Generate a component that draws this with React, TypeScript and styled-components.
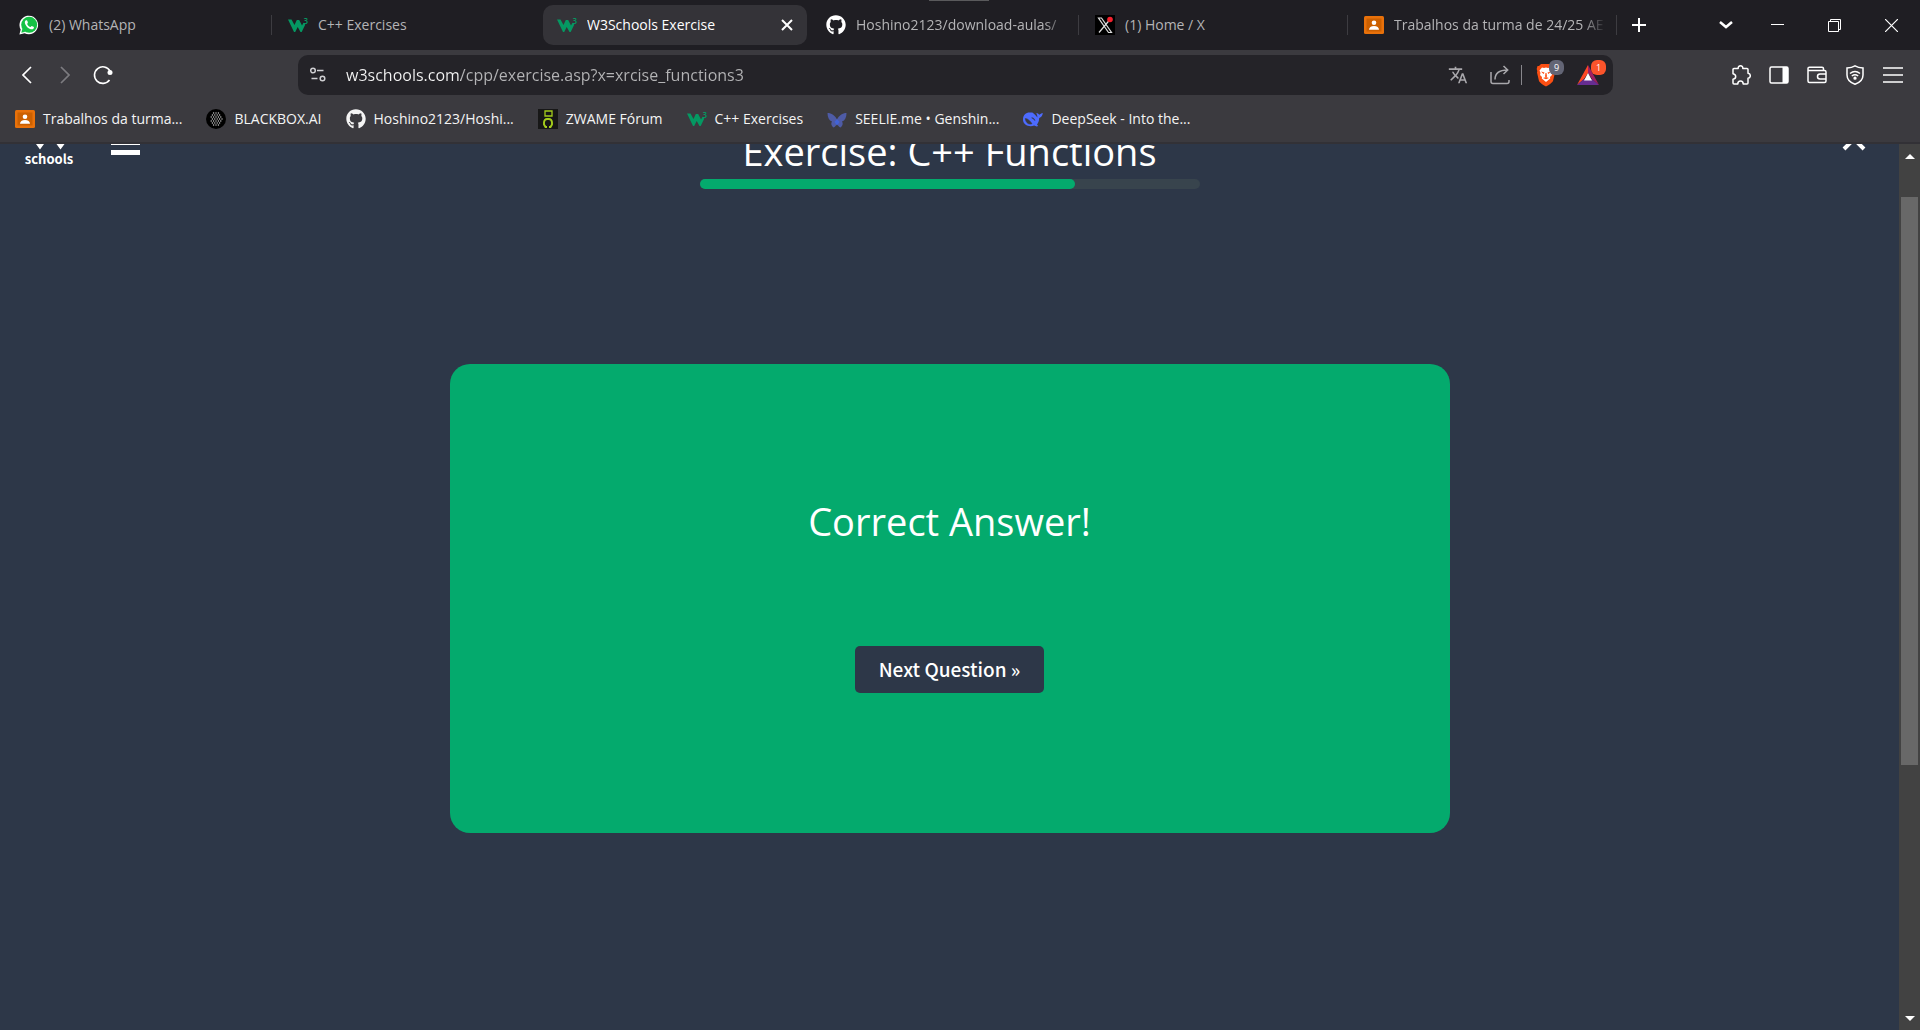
import React from 'react';
import styled, { createGlobalStyle } from 'styled-components';
import { FaGithub } from 'react-icons/fa';
import { MdTranslate } from 'react-icons/md';

const green = '#04aa6d';
const navy = '#2d3748';
const uiFont = '"Segoe UI", "Open Sans", "Noto Sans", sans-serif';

const GlobalStyle = createGlobalStyle`
  *, *::before, *::after { box-sizing: border-box; }
  body { margin: 0; background: ${navy}; font-family: ${uiFont}; color: #fff; }
  button, input { font: inherit; color: inherit; border: 0; background: none; padding: 0; margin: 0; }
  button { cursor: pointer; }
  svg { display: block; flex: none; }
`;

const Shell = styled.div`
  display: flex;
  flex-direction: column;
  height: 100vh;
  overflow: hidden;
`;

/* ---------- tab strip ---------- */

const TabStrip = styled.header`
  position: relative;
  display: flex;
  align-items: center;
  height: 50px;
  flex: none;
  padding-left: 5px;
  background: #1f1e23;
`;

const DragHandle = styled.span`
  position: absolute;
  top: 0;
  left: 50%;
  width: 60px;
  height: 1px;
  margin-left: -31px;
  background: #5a5a5c;
`;

const TabList = styled.div`
  display: flex;
  align-items: center;
  min-width: 0;
`;

const Tab = styled.div<{ $active?: boolean }>`
  display: flex;
  align-items: center;
  flex: 0 1 264px;
  width: 264px;
  min-width: 0;
  height: 40px;
  padding: 0 8px 0 14px;
  border-radius: 10px;
  background: ${(p) => (p.$active ? '#343338' : 'transparent')};
  color: ${(p) => (p.$active ? '#fff' : '#b4b4b6')};
`;

const TabButton = styled.button`
  display: flex;
  align-items: center;
  gap: 10px;
  flex: 1;
  min-width: 0;
  height: 100%;
  text-align: left;
`;

const TabTitle = styled.span<{ $fade?: boolean }>`
  flex: 1;
  min-width: 0;
  overflow: hidden;
  white-space: nowrap;
  font-size: 14px;
  line-height: 20px;
  ${(p) => p.$fade && 'mask-image: linear-gradient(to left, transparent, #000 24px);'}
`;

const TabDivider = styled.span<{ $hidden?: boolean }>`
  flex: none;
  width: 1px;
  height: 20px;
  margin: 0 2px;
  background: ${(p) => (p.$hidden ? 'transparent' : '#3d3c41')};
`;

const IconButton = styled.button<{ $width?: number }>`
  display: flex;
  align-items: center;
  justify-content: center;
  flex: none;
  width: ${(p) => p.$width ?? 38}px;
  height: 40px;
`;

const TabClose = styled(IconButton)`
  width: 24px;
`;

const WindowControls = styled.div`
  display: flex;
  align-items: center;
  margin-left: auto;
`;

/* ---------- toolbar ---------- */

const Toolbar = styled.div`
  display: flex;
  align-items: center;
  flex: none;
  height: 50px;
  background: #3b3a3f;
`;

const NavGroup = styled.nav`
  display: flex;
  flex: none;
  width: 298px;
  padding-left: 8px;
`;

const AddressBar = styled.form`
  display: flex;
  align-items: center;
  flex: 1;
  min-width: 0;
  height: 40px;
  padding-right: 4px;
  border-radius: 10px;
  background: #242328;
`;

const AddressInput = styled.input`
  flex: 1;
  min-width: 0;
  height: 40px;
  margin-left: 8px;
  outline: none;
  font-size: 16px;
  color: #b4b4b6;
  background: linear-gradient(to right, #f4f4f4 115px, #b4b4b6 115px);
  background-clip: text;
  -webkit-text-fill-color: transparent;
`;

const AddressDivider = styled.span`
  flex: none;
  width: 1px;
  height: 20px;
  margin-right: 3px;
  background: #88878c;
`;

const BadgeHost = styled(IconButton)`
  position: relative;
  width: 42px;
`;

const Badge = styled.span<{ $color: string }>`
  position: absolute;
  top: 5px;
  left: 24px;
  width: 15px;
  height: 15px;
  border-radius: 6px;
  background: ${(p) => p.$color};
  color: #fff;
  font-size: 9px;
  line-height: 15px;
  text-align: center;
`;

const ToolGroup = styled.div`
  display: flex;
  justify-content: flex-end;
  flex: none;
  width: 307px;
  padding-right: 8px;
`;

/* ---------- bookmarks ---------- */

const BookmarkBar = styled.nav`
  display: flex;
  align-items: center;
  gap: 24px;
  flex: none;
  height: 44px;
  padding: 0 15px 4px;
  border-bottom: 2px solid #323136;
  background: #3b3a3f;
`;

const Bookmark = styled.a`
  display: flex;
  align-items: center;
  gap: 8px;
  color: #f4f4f4;
  font-size: 14px;
  line-height: 20px;
  white-space: nowrap;
  text-decoration: none;
`;

/* ---------- page ---------- */

const Viewport = styled.div`
  display: flex;
  flex: 1;
  min-height: 0;
`;

const Page = styled.main`
  flex: 1;
  min-width: 0;
  overflow: hidden;
  background: ${navy};
`;

const ScrolledContent = styled.div`
  margin-top: -36px;
`;

const PageHeader = styled.div`
  display: flex;
  align-items: flex-start;
  padding: 0 25px;
`;

const HeaderSide = styled.div`
  display: flex;
  flex: 1;
  gap: 38px;
`;

const HeaderEnd = styled(HeaderSide)`
  justify-content: flex-end;
`;

const Logo = styled.a`
  display: flex;
  flex-direction: column;
  align-items: center;
  width: 48px;
  padding-top: 4px;
  color: #fff;
  font-family: "Noto Sans CJK SC", sans-serif;
  font-size: 13px;
  font-weight: 700;
  line-height: 18px;
  text-decoration: none;
`;

const MenuButton = styled.button`
  display: flex;
  flex-direction: column;
  gap: 5px;
  width: 29px;
  padding-top: 22px;
`;

const MenuBar = styled.span`
  width: 100%;
  height: 5px;
  background: #fff;
`;

const CloseButton = styled.button`
  padding: 20px 7px 0;
`;

const Progress = styled.section`
  flex: 0 1 500px;
  padding-top: 17px;
`;

const Title = styled.h1`
  margin: 0 0 2px;
  font-size: 38px;
  font-weight: 400;
  line-height: 52px;
  text-align: center;
  white-space: nowrap;
`;

const ProgressTrack = styled.div`
  height: 10px;
  border-radius: 5px;
  background: #38444d;
`;

const ProgressFill = styled.div`
  width: 75%;
  height: 100%;
  border-radius: 5px;
  background: ${green};
`;

const AnswerCard = styled.section`
  display: flex;
  flex-direction: column;
  align-items: center;
  gap: 98px;
  width: calc(100% - 32px);
  max-width: 1000px;
  margin: 175px auto 0;
  padding: 130px 24px 140px;
  border-radius: 20px;
  background: ${green};
`;

const AnswerText = styled.h2`
  margin: 0;
  font-size: 38px;
  font-weight: 400;
  line-height: 54px;
`;

const NextButton = styled.button`
  height: 47px;
  padding: 0 24px 2px;
  border-radius: 5px;
  background: ${navy};
  font-family: "Source Sans Pro", "Noto Sans CJK SC", sans-serif;
  font-size: 19px;
  font-weight: 500;
`;

/* ---------- scrollbar ---------- */

const Scrollbar = styled.div`
  display: flex;
  flex-direction: column;
  flex: none;
  width: 21px;
  padding: 0 2px;
  background: #424242;
`;

const ScrollArrow = styled.button`
  display: flex;
  align-items: center;
  justify-content: center;
  flex: none;
  height: 24px;
`;

const ScrollSpace = styled.div<{ $part: number }>`
  flex: ${(p) => p.$part} 1 0;
`;

const ScrollThumb = styled(ScrollSpace)`
  background: #686868;
`;

/* ---------- drawings ---------- */

const line = { fill: 'none', stroke: 'currentColor' } as const;

const W3Icon = () => (
  <svg width="20" height="20" viewBox="0 0 20 20">
    <path d="M0 4.500h3.500l3 5.500 2.300-5h2.400l2.800 5.500 1.500-2.800 1.800 1.800-3.600 7.500h-1.200L9.700 12l-2.500 5H6z" fill="#059862" />
    <text x="15.500" y="9" fontSize="8" fontWeight="600" fill="#059862">3</text>
  </svg>
);

const WhatsAppIcon = () => (
  <svg width="20" height="20" viewBox="0 0 20 20">
    <path d="M.4 19.600l1.300-5A9.300 9.300 0 1 1 5.600 18.300z" fill="#fff" />
    <circle cx="10.200" cy="9.800" r="8" fill="#15c245" />
    <path d="M2.300 17.800l1-4 3 3z" fill="#15c245" />
    <path d="M6.900 5.300c-1.200.8-1.400 2.200-.6 3.900 1.200 2.500 3 4.200 5.400 5 1.700.5 3-.2 3.300-1.800.1-.5-2-1.600-2.400-1.500l-1 1.200c-1.600-.6-2.800-1.700-3.500-3.200l.8-1.100c.1-.4-.8-2.500-1.100-2.500z" fill="#fff" />
  </svg>
);

const ClassroomIcon = () => (
  <svg width="20" height="20" viewBox="0 0 20 20">
    <rect y="1" width="20" height="18" rx="1.500" fill="#e8710a" />
    <rect x="2.500" y="3.500" width="15" height="13" fill="#cc6000" />
    <circle cx="10" cy="7.800" r="2.300" fill="#fff" />
    <path d="M5 14.800c0-2.700 2-3.900 5-3.900s5 1.200 5 3.900z" fill="#fff" />
  </svg>
);

const XIcon = () => (
  <svg width="20" height="20" viewBox="0 0 20 20">
    <rect width="20" height="20" fill="#000" />
    <path d="M3.500 3h3l10 14.500h-3zM16.300 3L4 17.500" fill="none" stroke="#ddd" strokeWidth="1.200" />
    <circle cx="15" cy="4.500" r="2.800" fill="#f4212e" />
  </svg>
);

const BlackboxIcon = () => (
  <svg width="20" height="20" viewBox="0 0 20 20">
    <circle cx="10" cy="10" r="10" fill="#000" />
    {[0, 1, 2, 3, 4, 5, 6].map((r) =>
      [0, 1, 2, 3, 4].map((c) => {
        const x = 5.2 + c * 2.4 + (r % 2 ? 1.2 : 0);
        const y = 4 + r * 2;
        return Math.hypot(x - 10, y - 10) < 6.5 ? (
          <circle key={`${r}-${c}`} cx={x} cy={y} r=".7" fill="#ccc" />
        ) : null;
      }),
    )}
  </svg>
);

const ZwameIcon = () => (
  <svg width="20" height="20" viewBox="0 0 20 20">
    <rect width="20" height="20" fill="#171717" />
    <path d="M7 2h7v5H7z" fill="none" stroke="#a4cc1c" strokeWidth="1.300" />
    <path d="M9 18H7.500L6 15.500v-2c0-2 1.500-3.500 3-3.500h2c1.500 0 3 1.500 3 3.500v2L12.500 18H11" fill="none" stroke="#a4cc1c" strokeWidth="1.900" />
  </svg>
);

const SeelieIcon = () => (
  <svg width="20" height="20" viewBox="0 0 20 20">
    <path d="M.5 4c4 0 7.500 2.500 9.500 6.500C12 6.500 15.500 4 19.500 4c0 4.500-1.500 7.500-4.500 8.500 1.500 2 .5 4.500-1.500 6-1.500-.5-2.800-2-3.500-4-.7 2-2 3.500-3.500 4-2-1.500-3-4-1.500-6C2 11.500.5 8.500.5 4z" fill="#4e5ba6" />
    <path d="M10 10l2.500 3-2.500 3.500L7.500 13z" fill="#4263d8" />
  </svg>
);

const DeepSeekIcon = () => (
  <svg width="20" height="20" viewBox="0 0 20 20">
    <path d="M0 10.500C0 6 3 3.500 6.500 3.500c1.200 0 2-.2 2.800 0 1.800 1 3.700 3 5 5 .3-1.700-.6-3-1-4.500 1.300 0 2.500 1 3 1.800 1-.8 2-1.500 3.500-1.800-.2 2.500-1.500 4.500-3.600 5 0 3-1 5-2.200 6.500l1.200 1.500c-1.500.8-3 .2-4-.5-4.500 1.800-11.200 0-11.200-6z" fill="#4d6bfe" />
    <path d="M2.300 9.500c2.700.2 4.700 2.500 6.700 5.200-3 1.300-6.200-.7-6.700-5.200zM8.500 8.800c1.500-.3 3 .8 3.500 3" fill="#3b3a3f" stroke="#3b3a3f" strokeWidth=".6" />
  </svg>
);

const SiteSettingsIcon = () => (
  <svg width="16" height="16" viewBox="0 0 16 16" fill="none" stroke="#cfcfd2" strokeWidth="1.500">
    <circle cx="3" cy="3.500" r="2.300" />
    <path d="M7 3.500h6.500M1.500 11.500h6" />
    <circle cx="12.500" cy="11.500" r="2.300" />
  </svg>
);

const ShareIcon = () => (
  <svg width="20" height="20" viewBox="0 0 20 20" fill="none" stroke="#a9a8ac" strokeWidth="1.500">
    <path d="M1 7v9.500a2 2 0 0 0 2 2h14a2 2 0 0 0 2-2V15M5 14.500c0-6 3.500-9.500 12.500-9.500M13.500 1l4.200 4-4.200 4" />
  </svg>
);

const BraveIcon = () => (
  <svg width="20" height="24" viewBox="0 0 20 24">
    <path d="M5 1h10l2 2 1.500 0 .8 3-.6 2 .3 1.500-2 8.500c-.3 1.200-5 4.700-7 5.500-2-.8-6.700-4.300-7-5.500L1 9.500 1.300 8 .7 6l.8-3H3z" fill="#fb4f13" />
    <path d="M6 4.500l2 .5 2-.5 2 .5 2-.5 2.500 3-1 2.500.5 2-2 2 .2 1.500-4.200 3.500-4.200-3.500.2-1.500-2-2 .5-2-1-2.500z" fill="#fff" />
    <path d="M5 8.500l3.500 1-1 1.500zM15 8.500l-3.500 1 1 1.500zM9.500 10h1l.5 3.500-1 .7-1-.7zM7 15l3-1 3 1-3 1.200z" fill="#fb4f13" />
  </svg>
);

const RewardsIcon = () => (
  <svg width="22" height="20" viewBox="0 0 22 20">
    <path d="M11 0v8L7 14l-7 6z" fill="#ff4724" />
    <path d="M0 20l7-6h8l7 6z" fill="#662d91" />
    <path d="M11 0l11 20-7-6-4-6z" fill="#9e1f63" />
    <path d="M11 8l4 7.500H7z" fill="#fff" />
  </svg>
);

const PuzzleIcon = () => (
  <svg width="20" height="20" viewBox="0 0 20 20" {...line} strokeWidth="1.500" strokeLinejoin="round">
    <path d="M3 3.500h4.200c-.2-1.700.8-2.700 2.300-2.700s2.500 1 2.300 2.700H16a1 1 0 0 1 1 1v3.700c1.500.2 2.300 1.200 2.300 2.500S18.500 13 17 13.200V18a1 1 0 0 1-1 1h-3.800c0-2-1-3-2.700-3s-2.700 1-2.700 3H3a1 1 0 0 1-1-1v-3.700c2-.2 2.700-1.300 2.700-2.700S4 9 2 8.700V4.500a1 1 0 0 1 1-1z" />
  </svg>
);

const SidebarIcon = () => (
  <svg width="20" height="20" viewBox="0 0 20 20">
    <rect x="1" y="2" width="18" height="16" rx="1.500" {...line} strokeWidth="1.500" />
    <path d="M13.500 2H18a1 1 0 0 1 1 1v14a1 1 0 0 1-1 1h-4.500z" fill="currentColor" />
  </svg>
);

const WalletIcon = () => (
  <svg width="20" height="20" viewBox="0 0 20 20" {...line} strokeWidth="1.500">
    <path d="M1 4v12a1.500 1.500 0 0 0 1.500 1.500h15A1.500 1.500 0 0 0 19 16V7a1.500 1.500 0 0 0-1.500-1.500h-15A1.600 1.600 0 0 1 2.500 2.300H15a1.500 1.500 0 0 1 1.500 1.500v1.500M19 9h-6a2.500 2.500 0 0 0 0 5h6" />
  </svg>
);

const VpnIcon = () => (
  <svg width="20" height="20" viewBox="0 0 20 20" {...line} strokeWidth="1.500">
    <path d="M10 .8c2.500 1.500 5 2 8 2.200v7c0 4.500-3 7.500-8 9.300-5-1.800-8-4.800-8-9.300V3c3-.2 5.500-.7 8-2.200z" />
    <path d="M5 8.500c3-2.500 7-2.500 10 0M6.800 11c2-1.500 4.400-1.500 6.400 0" />
    <circle cx="10" cy="13.200" r=".9" fill="currentColor" />
  </svg>
);

const Stroke = ({ d, w = 20, h = 20, weight = 1.5 }: { d: string; w?: number; h?: number; weight?: number }) => (
  <svg width={w} height={h} viewBox={`0 0 ${w} ${h}`} {...line} strokeWidth={weight}>
    <path d={d} />
  </svg>
);

/* ---------- data ---------- */

const tabs = [
  { title: '(2) WhatsApp', icon: <WhatsAppIcon /> },
  { title: 'C++ Exercises', icon: <W3Icon /> },
  { title: 'W3Schools Exercise', icon: <W3Icon />, active: true },
  { title: 'Hoshino2123/download-aulas/', icon: <FaGithub size={20} color="#fff" />, fade: true },
  { title: '(1) Home / X', icon: <XIcon /> },
  { title: 'Trabalhos da turma de 24/25 AE', icon: <ClassroomIcon />, fade: true },
];

const bookmarks = [
  { title: 'Trabalhos da turma...', icon: <ClassroomIcon /> },
  { title: 'BLACKBOX.AI', icon: <BlackboxIcon /> },
  { title: 'Hoshino2123/Hoshi...', icon: <FaGithub size={20} /> },
  { title: 'ZWAME Fórum', icon: <ZwameIcon /> },
  { title: 'C++ Exercises', icon: <W3Icon /> },
  { title: 'SEELIE.me • Genshin...', icon: <SeelieIcon /> },
  { title: 'DeepSeek - Into the...', icon: <DeepSeekIcon /> },
];

export default function App() {
  return (
    <Shell>
      <GlobalStyle />
      <TabStrip>
        <DragHandle />
        <TabList role="tablist">
          {tabs.map((tab, i) => (
            <React.Fragment key={tab.title}>
              <Tab $active={tab.active}>
                <TabButton role="tab" aria-selected={!!tab.active}>
                  {tab.icon}
                  <TabTitle $fade={tab.fade}>{tab.title}</TabTitle>
                </TabButton>
                {tab.active && (
                  <TabClose aria-label="Close tab">
                    <Stroke w={12} h={12} weight={2} d="M1 1l10 10M11 1L1 11" />
                  </TabClose>
                )}
              </Tab>
              <TabDivider $hidden={tab.active || tabs[i + 1]?.active} />
            </React.Fragment>
          ))}
        </TabList>
        <IconButton $width={40} aria-label="New tab">
          <Stroke w={14} h={14} weight={2} d="M7 0v14M0 7h14" />
        </IconButton>
        <WindowControls>
          <IconButton $width={46} aria-label="Search tabs">
            <Stroke w={14} h={10} weight={2.5} d="M1 2l6 5 6-5" />
          </IconButton>
          <IconButton $width={57} aria-label="Minimize">
            <Stroke w={13} h={3} weight={1} d="M0 .5h13" />
          </IconButton>
          <IconButton $width={57} aria-label="Restore">
            <Stroke w={13} h={13} weight={1} d="M.5 2.500h10v10H.5zM2.500 2.500v-2h10v10h-2" />
          </IconButton>
          <IconButton $width={57} aria-label="Close window">
            <Stroke w={13} h={13} weight={1.2} d="M0 0l13 13M13 0L0 13" />
          </IconButton>
        </WindowControls>
      </TabStrip>

      <Toolbar>
        <NavGroup aria-label="History">
          <IconButton aria-label="Back">
            <Stroke w={10} h={18} weight={1.7} d="M9 1L1 9l8 8" />
          </IconButton>
          <IconButton aria-label="Forward" disabled>
            <svg width="10" height="18" viewBox="0 0 10 18" fill="none" stroke="#7d7c80" strokeWidth="1.700">
              <path d="M1 1l8 8-8 8" />
            </svg>
          </IconButton>
          <IconButton aria-label="Reload">
            <svg width="20" height="20" viewBox="0 0 20 20">
              <path d="M16.500 15A8.300 8.300 0 1 1 17 6" {...line} strokeWidth="1.600" />
              <circle cx="17" cy="7.500" r="2.500" fill="currentColor" />
            </svg>
          </IconButton>
        </NavGroup>
        <AddressBar onSubmit={(e) => e.preventDefault()}>
          <IconButton $width={40} type="button" aria-label="Site settings">
            <SiteSettingsIcon />
          </IconButton>
          <AddressInput aria-label="Address" defaultValue="w3schools.com/cpp/exercise.asp?x=xrcise_functions3" />
          <IconButton $width={42} type="button" aria-label="Translate">
            <MdTranslate size={20} color="#a9a8ac" />
          </IconButton>
          <IconButton $width={42} type="button" aria-label="Share">
            <ShareIcon />
          </IconButton>
          <AddressDivider />
          <BadgeHost type="button" aria-label="Shields">
            <BraveIcon />
            <Badge $color="#636575">9</Badge>
          </BadgeHost>
          <BadgeHost type="button" aria-label="Rewards">
            <RewardsIcon />
            <Badge $color="#fb542b">1</Badge>
          </BadgeHost>
        </AddressBar>
        <ToolGroup>
          <IconButton aria-label="Extensions"><PuzzleIcon /></IconButton>
          <IconButton aria-label="Sidebar"><SidebarIcon /></IconButton>
          <IconButton aria-label="Wallet"><WalletIcon /></IconButton>
          <IconButton aria-label="VPN"><VpnIcon /></IconButton>
          <IconButton aria-label="Menu">
            <Stroke w={20} h={16} d="M0 1h20M0 8h20M0 15h20" />
          </IconButton>
        </ToolGroup>
      </Toolbar>

      <BookmarkBar aria-label="Bookmarks">
        {bookmarks.map((b) => (
          <Bookmark key={b.title} href="#">
            {b.icon}
            <span>{b.title}</span>
          </Bookmark>
        ))}
      </BookmarkBar>

      <Viewport>
        <Page>
          <ScrolledContent>
            <PageHeader>
              <HeaderSide>
                <Logo href="#">
                  <svg width="48" height="38" viewBox="0 0 48 38">
                    <path d="M0 4h9l6 16 6-16h8l7 16 5-10 7 4-8.500 18-4 5.500-4-5.500L25 18l-6 14-4 5.500L11 32z" fill="#fff" />
                  </svg>
                  schools
                </Logo>
                <MenuButton aria-label="Menu">
                  <MenuBar />
                  <MenuBar />
                  <MenuBar />
                </MenuButton>
              </HeaderSide>
              <Progress>
                <Title>Exercise: C++ Functions</Title>
                <ProgressTrack role="progressbar" aria-label="Exercise progress" aria-valuenow={75}>
                  <ProgressFill />
                </ProgressTrack>
              </Progress>
              <HeaderEnd>
                <CloseButton aria-label="Close exercise">
                  <Stroke w={26} h={24} weight={4} d="M3 1l20 20M23 1L3 21" />
                </CloseButton>
              </HeaderEnd>
            </PageHeader>
            <AnswerCard>
              <AnswerText>Correct Answer!</AnswerText>
              <NextButton>Next Question »</NextButton>
            </AnswerCard>
          </ScrolledContent>
        </Page>
        <Scrollbar>
          <ScrollArrow aria-label="Scroll up">
            <svg width="10" height="5" viewBox="0 0 10 5"><path d="M0 5l5-5 5 5z" fill="#fff" /></svg>
          </ScrollArrow>
          <ScrollSpace $part={29} />
          <ScrollThumb $part={568} />
          <ScrollSpace $part={241} />
          <ScrollArrow aria-label="Scroll down">
            <svg width="10" height="5" viewBox="0 0 10 5"><path d="M0 0l5 5 5-5z" fill="#fff" /></svg>
          </ScrollArrow>
        </Scrollbar>
      </Viewport>
    </Shell>
  );
}
